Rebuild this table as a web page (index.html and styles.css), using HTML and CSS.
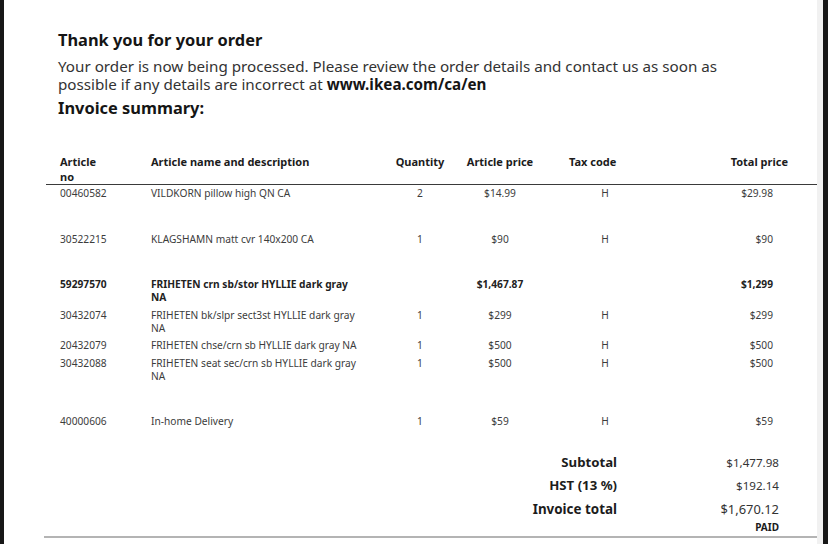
FILE: index.html
```html
<!DOCTYPE html>
<html lang="en">
<head>
<meta charset="utf-8">
<title>Invoice summary</title>
<link rel="stylesheet" href="styles.css">
</head>
<body>
<div class="viewer">
  <div class="sheet">
    <header class="intro">
      <h1 class="heading">Thank you for your order</h1>
      <p class="lead"><span class="seg">Your order is now being processed. Please review the order details and contact us as soon as</span> <span class="seg">possible if any details are incorrect at</span> <strong class="seg">www.ikea.com/ca/en</strong></p>
      <h2 class="heading sub">Invoice summary:</h2>
    </header>

    <div class="items">
      <div class="row head">
        <div class="c-no">Article no</div>
        <div class="c-name">Article name and description</div>
        <div class="c-qty">Quantity</div>
        <div class="c-price">Article price</div>
        <div class="c-tax">Tax code</div>
        <div class="c-total">Total price</div>
      </div>
      <div class="row spaced">
        <div class="c-no">00460582</div>
        <div class="c-name">VILDKORN pillow high QN CA</div>
        <div class="c-qty">2</div>
        <div class="c-price">$14.99</div>
        <div class="c-tax">H</div>
        <div class="c-total">$29.98</div>
      </div>
      <div class="row spaced">
        <div class="c-no">30522215</div>
        <div class="c-name">KLAGSHAMN matt cvr 140x200 CA</div>
        <div class="c-qty">1</div>
        <div class="c-price">$90</div>
        <div class="c-tax">H</div>
        <div class="c-total">$90</div>
      </div>
      <div class="row group">
        <div class="c-no">59297570</div>
        <div class="c-name">FRIHETEN crn sb/stor HYLLIE dark gray NA</div>
        <div class="c-qty"></div>
        <div class="c-price">$1,467.87</div>
        <div class="c-tax"></div>
        <div class="c-total">$1,299</div>
      </div>
      <div class="row">
        <div class="c-no">30432074</div>
        <div class="c-name">FRIHETEN bk/slpr sect3st HYLLIE dark gray NA</div>
        <div class="c-qty">1</div>
        <div class="c-price">$299</div>
        <div class="c-tax">H</div>
        <div class="c-total">$299</div>
      </div>
      <div class="row">
        <div class="c-no">20432079</div>
        <div class="c-name">FRIHETEN chse/crn sb HYLLIE dark gray NA</div>
        <div class="c-qty">1</div>
        <div class="c-price">$500</div>
        <div class="c-tax">H</div>
        <div class="c-total">$500</div>
      </div>
      <div class="row spaced">
        <div class="c-no">30432088</div>
        <div class="c-name">FRIHETEN seat sec/crn sb HYLLIE dark gray NA</div>
        <div class="c-qty">1</div>
        <div class="c-price">$500</div>
        <div class="c-tax">H</div>
        <div class="c-total">$500</div>
      </div>
      <div class="row">
        <div class="c-no">40000606</div>
        <div class="c-name">In-home Delivery</div>
        <div class="c-qty">1</div>
        <div class="c-price">$59</div>
        <div class="c-tax">H</div>
        <div class="c-total">$59</div>
      </div>
    </div>

    <div class="totals">
      <div class="t-label">Subtotal</div>
      <div class="t-value">$1,477.98</div>
      <div class="t-label">HST (13 %)</div>
      <div class="t-value">$192.14</div>
      <div class="t-label grand">Invoice total</div>
      <div class="t-value grand">$1,670.12</div>
      <div class="t-label"></div>
      <div class="t-value paid">PAID</div>
    </div>

    <div class="rule"></div>
  </div>
</div>
</body>
</html>
```

FILE: styles.css
```css
html, body {
  margin: 0;
  padding: 0;
}

body {
  width: 828px;
  height: 544px;
  overflow: hidden;
  background: #171717;
  font-family: "Noto Sans", "Open Sans", "Liberation Sans", sans-serif;
  color: #333;
}

.viewer {
  display: flex;
  height: 544px;
  padding: 0 5px 0 4px;
  box-sizing: border-box;
  background: #171717;
}

.sheet {
  flex: 1;
  background: #fff;
  border-right: 6px solid #f1f1f1;
  display: flex;
  flex-direction: column;
}

/* intro */
.intro {
  padding: 30px 0 0 54px;
}

.heading {
  margin: 0;
  font-size: 16.4px;
  line-height: 20px;
  font-weight: 700;
  color: #151515;
}

.heading.sub {
  margin-top: 5px;
}

.lead {
  margin: 7px 0 0;
  max-width: 668px;
  font-size: 15.2px;
  line-height: 18px;
  color: #333;
}

.lead .seg {
  display: inline-block;
  line-height: 18px;
}

.lead strong {
  color: #151515;
  font-weight: 700;
}

/* items table */
.items {
  margin: 37px 0 0 42px;
  font-size: 10.2px;
  color: #3c3c3c;
}

.row {
  display: grid;
  grid-template-columns: 91px 229px 80px 80px 130px 1fr;
  padding: 0 29px 4.5px 14px;
  line-height: 13px;
}

.row.spaced {
  padding-bottom: 32.5px;
}

.row.head {
  font-size: 11px;
  font-weight: 700;
  line-height: 14.5px;
  color: #1c1c1c;
  padding-bottom: 0;
  margin-bottom: 2px;
  border-bottom: 1.5px solid #3a3a3a;
}

.row.head .c-no {
  width: 48px;
}

.row.group {
  font-weight: 700;
  color: #222;
}

.c-name {
  padding-right: 15px;
}

.c-qty,
.c-price,
.c-tax {
  text-align: center;
}

.row.head .c-tax {
  text-align: left;
  padding-left: 29px;
}

.c-total {
  text-align: right;
  padding-right: 15px;
}

.row.head .c-total {
  padding-right: 0;
}

/* totals */
.totals {
  display: grid;
  grid-template-columns: auto 162px;
  justify-content: end;
  margin: 18px 38px 0 0;
  line-height: 23.5px;
}

.t-label {
  text-align: right;
  font-size: 13.2px;
  font-weight: 700;
  color: #1c1c1c;
}

.t-value {
  text-align: right;
  font-size: 11.6px;
  color: #333;
}

.t-label.grand {
  font-size: 13.4px;
}

.t-value.grand {
  font-size: 12.9px;
}

.t-value.paid {
  font-size: 10px;
  font-weight: 700;
  line-height: 13px;
  color: #1c1c1c;
}

.rule {
  margin: 2px 0 0 40px;
  height: 2px;
  background: #b4b4b4;
}
```
